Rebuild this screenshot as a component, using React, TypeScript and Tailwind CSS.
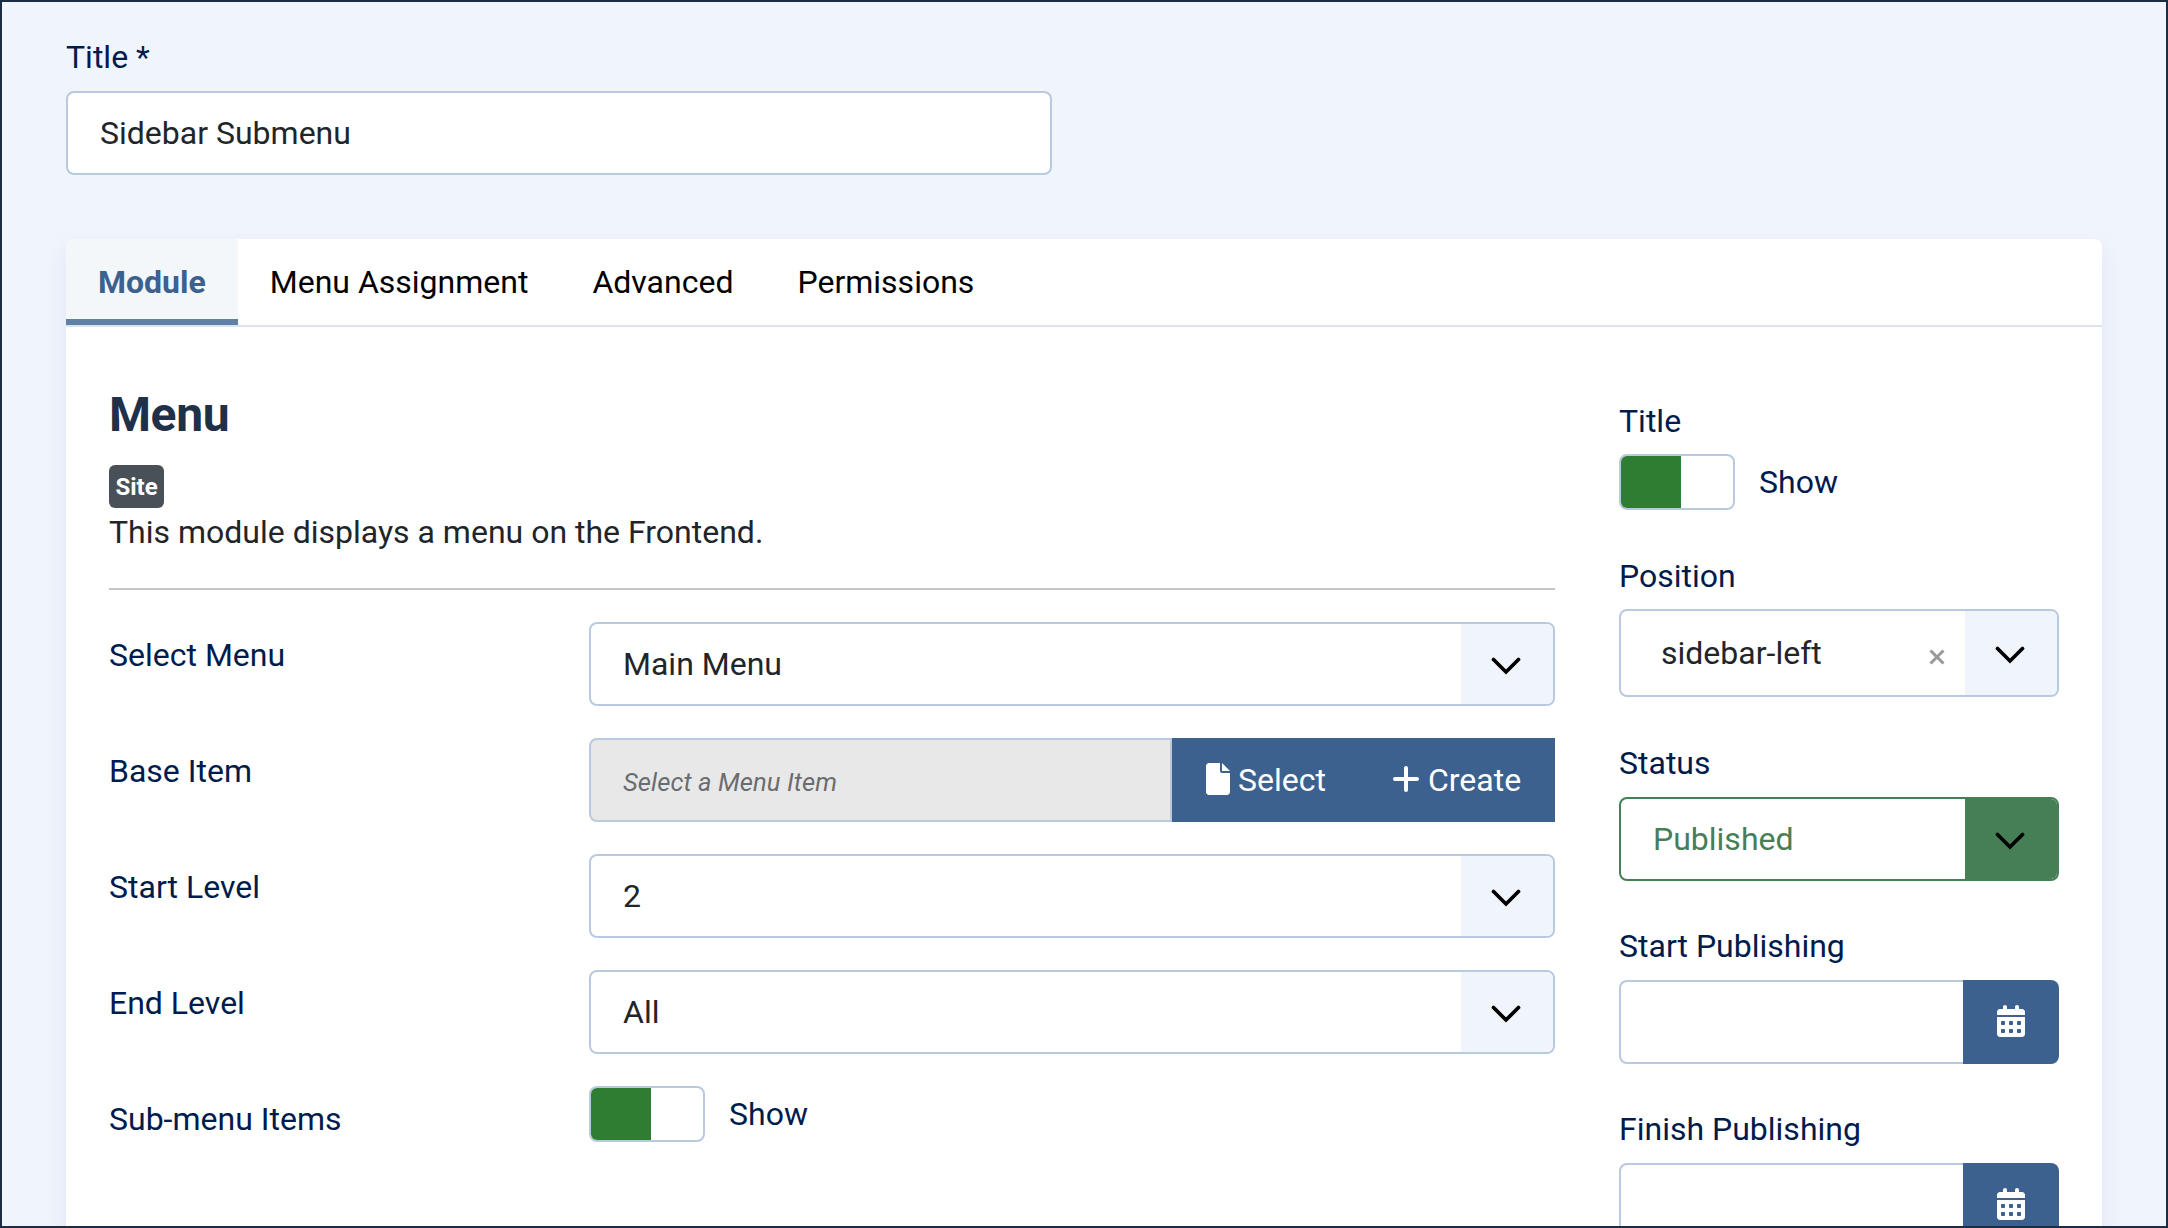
import React from 'react';
import { FaCalendarDays, FaPlus } from 'react-icons/fa6';

interface SelectBoxProps {
  value: string;
}

const TABS = ['Module', 'Menu Assignment', 'Advanced', 'Permissions'];

const Chevron = () => (
  <svg viewBox="0 0 30 18" className="w-[30px] h-[18px]" fill="none" stroke="#000" strokeWidth="3.7" strokeLinecap="round">
    <path d="M2.5 2.5 L15 15 L27.5 2.5" strokeLinejoin="miter" />
  </svg>
);

const FileIcon = () => (
  <svg viewBox="0 0 384 512" className="mr-2 mb-[2px] h-8 w-6" fill="currentColor">
    <path d="M256 0v128h128L256 0zM224 128V0H48C21.5 0 0 21.5 0 48v416c0 26.5 21.5 48 48 48h288c26.5 0 48-21.5 48-48V160H256c-17.7 0-32-14.3-32-32z" />
  </svg>
);

const Label = ({ children }: { children: React.ReactNode }) => (
  <label className="block text-[#001b4c] leading-[48px]">{children}</label>
);

const SelectBox: React.FC<SelectBoxProps> = ({ value }) => (
  <div className="flex h-[84px] w-[966px] overflow-hidden rounded-lg border-2 border-[#b8c9e0] bg-white">
    <div className="flex flex-1 items-center pl-8">{value}</div>
    <div className="flex w-[92px] items-center justify-center pr-[3px] pt-[4px] bg-[#f0f4fb]">
      <Chevron />
    </div>
  </div>
);

const Switch = () => (
  <div className="flex h-14 items-center">
    <div className="h-14 w-[116px] overflow-hidden rounded-lg border-2 border-[#b8c9e0] bg-white">
      <div className="h-full w-[60px] bg-[#2f7d32]" />
    </div>
    <span className="ml-6 text-[#001b4c]">Show</span>
  </div>
);

const DateField = ({ label }: { label: string }) => (
  <div>
    <Label>{label}</Label>
    <div className="mt-[10px] flex h-[84px]">
      <div className="flex-1 rounded-l-lg border-2 border-r-0 border-[#b8c9e0] bg-white" />
      <button className="flex w-24 items-center justify-center rounded-r-lg bg-[#3d618e] pb-[2px] text-white">
        <FaCalendarDays size={32} />
      </button>
    </div>
  </div>
);

const Row = ({ label, children }: { label: string; children: React.ReactNode }) => (
  <div className="flex">
    <div className="w-[480px] pt-[9px]">
      <Label>{label}</Label>
    </div>
    {children}
  </div>
);

const ModuleInfo = () => (
  <div>
    <h2 className="text-[48px] font-bold leading-[58px] tracking-[-0.4px] text-[#1f3048]">Menu</h2>
    <div className="mt-[21px] flex h-[43px]">
      <span className="flex w-[55px] items-center justify-center rounded-md bg-[#495057] text-[24px] font-bold text-white">
        Site
      </span>
    </div>
    <p className="leading-[48px]">This module displays a menu on the Frontend.</p>
    <hr className="mt-8 border-t-2 border-[#c5c5c5]" />
  </div>
);

const App: React.FC = () => {
  return (
    <div className="h-[1228px] w-[2168px] overflow-hidden border-2 border-[#1c2c44] bg-[#f0f4fb] px-16 pt-[31px] font-['Roboto',sans-serif] text-[32px] leading-[48px] text-[#212529]">
      <Label>Title *</Label>
      <div className="mt-[10px] flex h-[84px] w-[986px] items-center rounded-lg border-2 border-[#b8c9e0] bg-white pl-8">
        Sidebar Submenu
      </div>

      <div className="mt-16 h-[1100px] overflow-hidden rounded-lg bg-white shadow-[0_10px_20px_0_rgba(200,212,245,0.4)]">
        <div className="flex h-[88px] border-b-2 border-[#d9e3f1] text-black">
          {TABS.map((tab, index) => (
            <div
              key={tab}
              className={
                index === 0
                  ? 'flex items-center border-b-[6px] border-[#6080a6] bg-[#f3f7fa] px-8 pt-[6px] font-bold text-[#3d618e]'
                  : 'flex items-center px-8'
              }
            >
              {tab}
            </div>
          ))}
        </div>

        <div className="flex gap-16 px-[43px]">
          <div className="w-[1446px] pt-[59px]">
            <ModuleInfo />
            <div className="mt-8 flex flex-col gap-8">
              <Row label="Select Menu">
                <SelectBox value="Main Menu" />
              </Row>
              <Row label="Base Item">
                <div className="flex h-[84px] w-[966px]">
                  <div className="flex flex-1 items-center rounded-l-lg border-2 border-[#b8c9e0] bg-[#e8e8e8] pl-8 pt-1 text-[25.6px] italic tracking-[0.08px] text-[#6a6d70]">
                    Select a Menu Item
                  </div>
                  <div className="flex w-[383px] bg-[#3d618e] text-white">
                    <button className="flex items-center pl-[34px] pr-[34px]">
                      <FileIcon />
                      Select
                    </button>
                    <button className="flex items-center pl-8">
                      <FaPlus size={32} className="mr-2 mb-[2px] w-7" />
                      Create
                    </button>
                  </div>
                </div>
              </Row>
              <Row label="Start Level">
                <SelectBox value="2" />
              </Row>
              <Row label="End Level">
                <SelectBox value="All" />
              </Row>
              <Row label="Sub-menu Items">
                <Switch />
              </Row>
            </div>
          </div>

          <div className="w-[440px] pt-[70px]">
            <Label>Title</Label>
            <div className="mt-[9px] mb-[42px]">
              <Switch />
            </div>
            <Label>Position</Label>
            <div className="mt-[9px] mb-[42px] flex h-[88px] overflow-hidden rounded-lg border-2 border-[#b8c9e0] bg-white">
              <div className="flex flex-1 items-center justify-between pl-10 pr-[20px]">
                <span>sidebar-left</span>
                <svg viewBox="0 0 16 16" className="mt-[8px] w-4 h-4" stroke="#999" strokeWidth="3">
                  <path d="M1.5 1.5 L14.5 14.5 M14.5 1.5 L1.5 14.5" />
                </svg>
              </div>
              <div className="flex w-[92px] items-center justify-center pr-[3px] pt-[4px] bg-[#f0f4fb]">
                <Chevron />
              </div>
            </div>
            <Label>Status</Label>
            <div className="mt-[10px] mb-[41px] flex h-[84px] overflow-hidden rounded-lg border-2 border-[#467f55] bg-white">
              <div className="flex flex-1 items-center pl-8 text-[#467f55]">Published</div>
              <div className="flex w-[92px] items-center justify-center pr-[3px] pt-[4px] bg-[#467f55]">
                <Chevron />
              </div>
            </div>
            <div className="flex flex-col gap-[41px]">
              <DateField label="Start Publishing" />
              <DateField label="Finish Publishing" />
            </div>
          </div>
        </div>
      </div>
    </div>
  );
};

export default App;
